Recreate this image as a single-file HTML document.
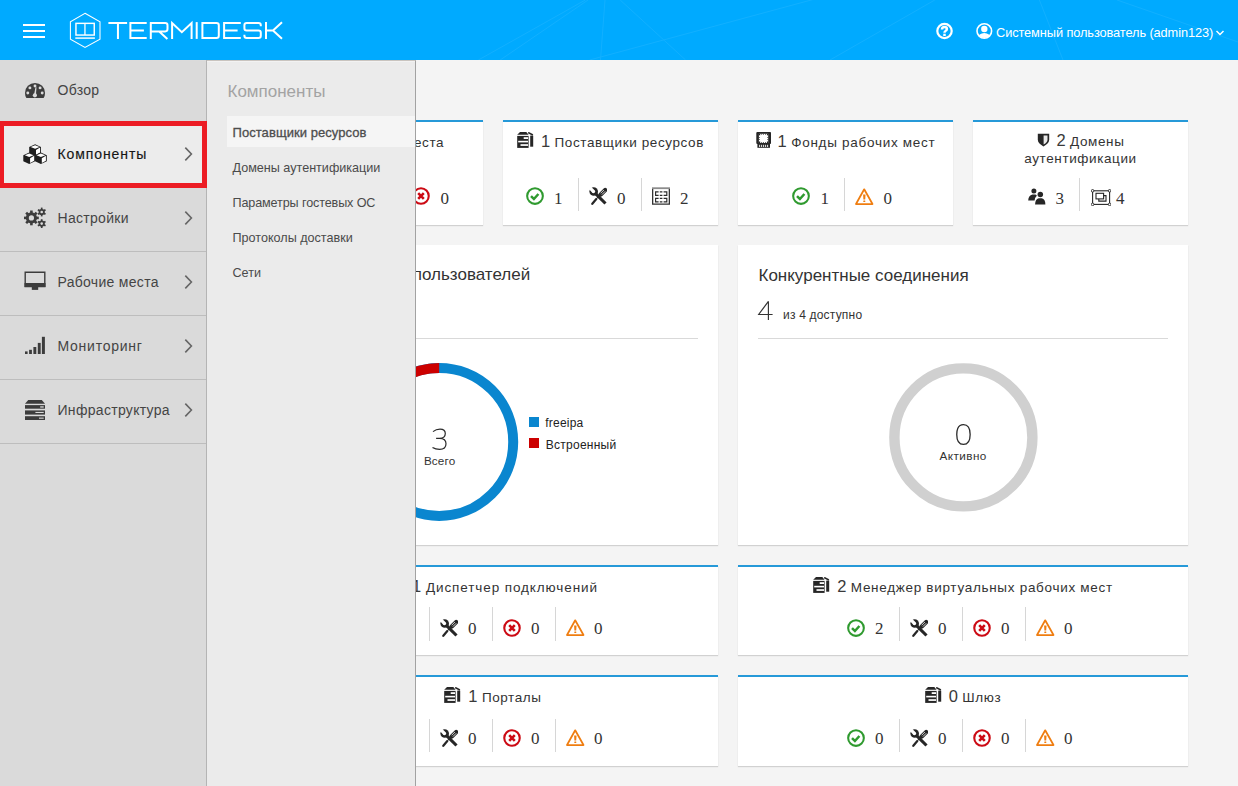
<!DOCTYPE html>
<html><head><meta charset="utf-8">
<style>
*{box-sizing:border-box;margin:0;padding:0}
html,body{width:1238px;height:786px;overflow:hidden;background:#f4f4f4;font-family:"Liberation Sans",sans-serif;color:#333}
.abs{position:absolute}
.t{position:absolute;white-space:nowrap}
#hdr{position:absolute;left:0;top:0;width:1238px;height:60px;background:#00aaff;overflow:hidden}
#side{position:absolute;left:0;top:60px;width:207px;height:726px;background:#dadada;border-right:1px solid #b4b4b4}
#fly{position:absolute;left:207px;top:60px;width:209px;height:726px;background:#ebebeb;border-right:1px solid #a2a2a2;border-top:1px solid #c9c4bf;box-shadow:inset 0 1px 0 #f2f2f2}
.card{position:absolute;background:#fff;box-shadow:0 1px 1px rgba(0,0,0,0.14)}
.card.bt{border-top:2px solid #2699d8}
.ttl{position:absolute;white-space:nowrap;font-size:13.5px;line-height:18px;color:#333;letter-spacing:0.6px;text-align:center}
.tn{font-size:16.5px;letter-spacing:0;color:#3a3a3a}
.dv{position:absolute;width:1px;background:#d6d6d6}
</style></head><body>

<div id="hdr">
  <svg class="abs" style="left:0;top:0" width="1238" height="60">
    <g stroke="#12b0ff" stroke-width="1" fill="none">
      <path d="M478.4 60L585.3 0M500.2 60L588 0M600.5 60L605 0M620.2 0L685.6 60M589.6 60L826 -4"/>
      <path d="M830 60L934.8 0M1039.4 0L1063 60M1117 0L1238 42"/>
    </g>
  </svg>
  <div class="abs" style="left:23px;top:24px;width:22px;height:2px;background:#fff"></div>
  <div class="abs" style="left:23px;top:30px;width:22px;height:2px;background:#fff"></div>
  <div class="abs" style="left:23px;top:36px;width:22px;height:2px;background:#fff"></div>
  <svg class="abs" style="left:68px;top:11px" width="36" height="40" viewBox="0 0 36 40">
    <polygon points="17,2.3 32,10.8 32,28.2 17,36.4 2.4,28.2 2.4,10.8" fill="none" stroke="#fff" stroke-width="1.05"/>
    <rect x="7.95" y="12.35" width="18.3" height="11.7" fill="none" stroke="#fff" stroke-width="1.45"/>
    <line x1="16.95" y1="12.35" x2="16.95" y2="24.05" stroke="#fff" stroke-width="1.3"/>
    <line x1="7.3" y1="27.1" x2="26.9" y2="27.1" stroke="#fff" stroke-width="1.45"/>
  </svg>
  <svg class="abs" style="left:0;top:0" width="300" height="60" viewBox="0 0 300 60">
    <g fill="none" stroke="#fff" stroke-width="2">
      <path d="M108.4 23.05H127.1M117.95 23.05V38.9"/>
      <path d="M146.7 23.05H130.4V37.95H146.7M130.4 30.5H143.9"/>
      <path d="M150.8 38.9V23.05H165.2Q167.5 23.05 167.5 25.3V29.1Q167.5 31.4 165.2 31.4H150.8M159.2 31.4L167.4 38.9"/>
      <path d="M172.1 38.9V23.05L181.85 32.2L191.6 23.05V38.9"/>
      <path d="M196.7 22.1V38.9"/>
      <path d="M202.4 23.05H216.5Q218.8 23.05 218.8 25.3V35.7Q218.8 37.95 216.5 37.95H202.4Z"/>
      <path d="M240.8 23.05H224.1V37.95H240.8M224.1 30.5H237.6"/>
      <path d="M260.8 26.3V25.3Q260.8 23.05 258.5 23.05H246.7Q244.4 23.05 244.4 25.3V28.2Q244.4 30.5 246.7 30.5H258.5Q260.8 30.5 260.8 32.8V35.7Q260.8 37.95 258.5 37.95H246.7Q244.4 37.95 244.4 35.7V34.7"/>
      <path d="M266 22.1V38.9M266 30.5H273M273 30.5L282 22.3M273 30.5L282 38.7"/>
    </g>
  </svg>
  <svg class="abs" style="left:935px;top:22px" width="19" height="19" viewBox="0 0 19 19">
    <circle cx="9.5" cy="9" r="7.2" fill="none" stroke="#fff" stroke-width="2.2"/>
    <path d="M7.0 7.5Q7.0 5.1 9.5 5.1Q11.9 5.1 11.9 7.0Q11.9 8.3 10.5 9.0Q9.5 9.5 9.5 10.7" fill="none" stroke="#fff" stroke-width="2.5"/>
    <rect x="8.25" y="11.7" width="2.5" height="2.3" fill="#fff"/>
  </svg>
  <svg class="abs" style="left:975px;top:22px" width="19" height="19" viewBox="0 0 19 19">
    <defs><clipPath id="uc"><circle cx="9.3" cy="9" r="7"/></clipPath></defs>
    <circle cx="9.3" cy="9" r="7.3" fill="none" stroke="#fff" stroke-width="1.6"/>
    <g clip-path="url(#uc)" fill="#fff">
      <circle cx="9.3" cy="7" r="3.2"/>
      <ellipse cx="9.3" cy="16.5" rx="6.5" ry="5.5"/>
    </g>
  </svg>
  <div class="t" style="left:996px;top:27px;font-size:12.8px;line-height:12.8px;color:#fff;letter-spacing:-0.1px">Системный пользователь (admin123)</div>
  <svg class="abs" style="left:1215px;top:29px" width="10" height="8" viewBox="0 0 10 8">
    <path d="M1.5 2L5 5.5L8.5 2" fill="none" stroke="#fff" stroke-width="1.5"/>
  </svg>
</div>

<div class="card bt" style="left:268px;top:120px;width:215px;height:105px"></div>
<div class="card bt" style="left:503px;top:120px;width:215px;height:105px"></div>
<div class="card bt" style="left:738px;top:120px;width:215px;height:105px"></div>
<div class="card bt" style="left:973px;top:120px;width:215px;height:105px"></div>
<div class="card" style="left:268px;top:245px;width:450px;height:300px"></div>
<div class="card" style="left:738px;top:245px;width:450px;height:300px"></div>
<div class="card bt" style="left:268px;top:565px;width:450px;height:90px"></div>
<div class="card bt" style="left:738px;top:565px;width:450px;height:90px"></div>
<div class="card bt" style="left:268px;top:675px;width:450px;height:91px"></div>
<div class="card bt" style="left:738px;top:675px;width:450px;height:91px"></div>
<div class="ttl" style="left:175.50px;width:400px;top:132.00px"><svg width="15" height="16" viewBox="0 0 15 16" style="vertical-align:-1px;margin-right:7px"><rect x="0.3" y="0" width="14.8" height="12" rx="1" fill="#262626"/><rect x="1.4" y="12" width="12.6" height="3.8" fill="#262626"/><g fill="#fff"><rect x="2.9" y="1.8" width="9.3" height="9.2"/></g><g fill="#262626"><rect x="2.9" y="1.8" width="1.3" height="1.5"/><rect x="10.9" y="1.8" width="1.3" height="1.5"/><rect x="2.9" y="9.5" width="1.3" height="1.5"/><rect x="10.9" y="9.5" width="1.3" height="1.5"/><rect x="5.4" y="1.8" width="0.7" height="1"/><rect x="7.3" y="1.8" width="0.7" height="1"/><rect x="9.1" y="1.8" width="0.7" height="1"/><rect x="5.4" y="10" width="0.7" height="1"/><rect x="7.3" y="10" width="0.7" height="1"/><rect x="9.1" y="10" width="0.7" height="1"/><rect x="2.9" y="5" width="1" height="0.7"/><rect x="2.9" y="7" width="1" height="0.7"/><rect x="11.2" y="5" width="1" height="0.7"/><rect x="11.2" y="7" width="1" height="0.7"/></g><g fill="#fff"><rect x="3.2" y="12.8" width="0.9" height="2.2"/><rect x="5.2" y="12.8" width="0.9" height="2.2"/><rect x="7.2" y="12.8" width="0.9" height="2.2"/><rect x="9.2" y="12.8" width="0.9" height="2.2"/><rect x="11.2" y="12.8" width="0.9" height="2.2"/></g></svg><span class="tn">1</span> Рабочие места</div>
<svg class="abs" style="left:286.30px;top:187.00px" width="18" height="18" viewBox="0 0 18 18"><circle cx="9" cy="9" r="7.85" fill="none" stroke="#2f9a2f" stroke-width="2.05"/><path d="M5.0 9.2L7.9 12.0L12.4 7.0" fill="none" stroke="#2f9a2f" stroke-width="2.5"/></svg>
<div class="t" style="top:189.76px;font-size:17px;line-height:17px;color:#333;font-family:'Liberation Serif',serif;left:314.50px;">1</div>
<div class="dv" style="left:338.00px;top:178.4px;height:32.3px"></div>
<svg class="abs" style="left:349.30px;top:186.50px" width="19" height="19" viewBox="0 0 19 19"><path d="M9.2 2.3L17.5 17H1.0Z" fill="none" stroke="#ef7d10" stroke-width="1.75" stroke-linejoin="round"/><path d="M8.1 7.6H10.5L10.2 12.4H8.4Z" fill="#ef7d10"/><rect x="8.2" y="13.4" width="2.2" height="1.5" rx="0.6" fill="#ef7d10"/></svg>
<div class="t" style="top:189.76px;font-size:17px;line-height:17px;color:#333;font-family:'Liberation Serif',serif;left:377.50px;">0</div>
<div class="dv" style="left:401.00px;top:178.4px;height:32.3px"></div>
<svg class="abs" style="left:412.30px;top:187.00px" width="18" height="18" viewBox="0 0 18 18"><circle cx="9" cy="9" r="7.75" fill="none" stroke="#cc0a14" stroke-width="2.1"/><path d="M6.2 6.2L11.8 11.8M11.8 6.2L6.2 11.8" fill="none" stroke="#cc0a14" stroke-width="2.6"/></svg>
<div class="t" style="top:189.76px;font-size:17px;line-height:17px;color:#333;font-family:'Liberation Serif',serif;left:440.50px;">0</div>
<div class="ttl" style="left:410.50px;width:400px;top:132.00px"><svg width="17" height="16" viewBox="0 0 17 16" style="vertical-align:-1.2px;margin-right:7px"><path d="M0.2 2.7L3.0 0H9.3L11.6 2.7Z" fill="#262626"/><rect x="0.2" y="3.9" width="11.4" height="12" fill="#262626"/><rect x="6.7" y="5.2" width="4.3" height="1.8" fill="#fff"/><rect x="1.2" y="8.8" width="9.8" height="1.6" fill="#fff"/><rect x="3.5" y="12.2" width="7.5" height="1.7" fill="#fff"/><path d="M11.2 0.5L15.9 3.0" stroke="#262626" stroke-width="1.5"/><rect x="13.2" y="3.6" width="3" height="11.1" fill="#262626"/></svg><span class="tn">1</span> Поставщики ресурсов</div>
<svg class="abs" style="left:525.80px;top:187.00px" width="18" height="18" viewBox="0 0 18 18"><circle cx="9" cy="9" r="7.85" fill="none" stroke="#2f9a2f" stroke-width="2.05"/><path d="M5.0 9.2L7.9 12.0L12.4 7.0" fill="none" stroke="#2f9a2f" stroke-width="2.5"/></svg>
<div class="t" style="top:189.76px;font-size:17px;line-height:17px;color:#333;font-family:'Liberation Serif',serif;left:554.00px;">1</div>
<div class="dv" style="left:577.50px;top:178.4px;height:32.3px"></div>
<svg class="abs" style="left:588.80px;top:187.00px" width="18" height="18" viewBox="0 0 18 18"><path d="M6.6 6.6L16.5 16.5" stroke="#262626" stroke-width="3.1"/><circle cx="4.7" cy="4.5" r="4.3" fill="#262626"/><path d="M4.4 4.4L-1 -1" stroke="#fff" stroke-width="3.3"/><circle cx="4.4" cy="4.4" r="1.75" fill="#fff"/><path d="M10.6 8.6L8.2 11" stroke="#262626" stroke-width="1.3"/><path d="M7.3 12.0L3.3 16.8" stroke="#262626" stroke-width="2.2" stroke-linecap="round"/><path d="M11.7 7.5L16.2 3.0" stroke="#262626" stroke-width="4.3" stroke-linecap="round"/><path d="M11.6 6.3L14.9 3.0M12.9 7.6L16.2 4.3" stroke="#fff" stroke-width="0.8"/></svg>
<div class="t" style="top:189.76px;font-size:17px;line-height:17px;color:#333;font-family:'Liberation Serif',serif;left:617.00px;">0</div>
<div class="dv" style="left:640.50px;top:178.4px;height:32.3px"></div>
<svg class="abs" style="left:651.80px;top:187.00px" width="18" height="18" viewBox="0 0 18 18"><path d="M0.65 1.2V17.15H17.35V1.2" fill="none" stroke="#333" stroke-width="1.3"/><rect x="0" y="0.3" width="18" height="1.8" fill="#8c8c8c"/><g fill="none" stroke="#2a2a2a" stroke-width="1.15"><path d="M6.6 4.8H3.6V8.3H6.6M11.6 4.8H14.8V8.3H11.6M7.8 4.8H10.4M7.8 8.3H10.4"/><path d="M6.6 11.3H3.6V14.9H6.6M11.6 11.3H14.8V14.9H11.6M7.8 11.3H10.4M7.8 14.9H10.4"/></g></svg>
<div class="t" style="top:189.76px;font-size:17px;line-height:17px;color:#333;font-family:'Liberation Serif',serif;left:680.00px;">2</div>
<div class="ttl" style="left:645.50px;width:400px;top:132.00px;letter-spacing:0.72px"><svg width="15" height="16" viewBox="0 0 15 16" style="vertical-align:-1px;margin-right:7px"><rect x="0.3" y="0" width="14.8" height="12" rx="1" fill="#262626"/><rect x="1.4" y="12" width="12.6" height="3.8" fill="#262626"/><g fill="#fff"><rect x="2.9" y="1.8" width="9.3" height="9.2"/></g><g fill="#262626"><rect x="2.9" y="1.8" width="1.3" height="1.5"/><rect x="10.9" y="1.8" width="1.3" height="1.5"/><rect x="2.9" y="9.5" width="1.3" height="1.5"/><rect x="10.9" y="9.5" width="1.3" height="1.5"/><rect x="5.4" y="1.8" width="0.7" height="1"/><rect x="7.3" y="1.8" width="0.7" height="1"/><rect x="9.1" y="1.8" width="0.7" height="1"/><rect x="5.4" y="10" width="0.7" height="1"/><rect x="7.3" y="10" width="0.7" height="1"/><rect x="9.1" y="10" width="0.7" height="1"/><rect x="2.9" y="5" width="1" height="0.7"/><rect x="2.9" y="7" width="1" height="0.7"/><rect x="11.2" y="5" width="1" height="0.7"/><rect x="11.2" y="7" width="1" height="0.7"/></g><g fill="#fff"><rect x="3.2" y="12.8" width="0.9" height="2.2"/><rect x="5.2" y="12.8" width="0.9" height="2.2"/><rect x="7.2" y="12.8" width="0.9" height="2.2"/><rect x="9.2" y="12.8" width="0.9" height="2.2"/><rect x="11.2" y="12.8" width="0.9" height="2.2"/></g></svg><span class="tn">1</span> Фонды рабочих мест</div>
<svg class="abs" style="left:792.30px;top:187.00px" width="18" height="18" viewBox="0 0 18 18"><circle cx="9" cy="9" r="7.85" fill="none" stroke="#2f9a2f" stroke-width="2.05"/><path d="M5.0 9.2L7.9 12.0L12.4 7.0" fill="none" stroke="#2f9a2f" stroke-width="2.5"/></svg>
<div class="t" style="top:189.76px;font-size:17px;line-height:17px;color:#333;font-family:'Liberation Serif',serif;left:820.50px;">1</div>
<div class="dv" style="left:844.00px;top:178.4px;height:32.3px"></div>
<svg class="abs" style="left:855.30px;top:186.50px" width="19" height="19" viewBox="0 0 19 19"><path d="M9.2 2.3L17.5 17H1.0Z" fill="none" stroke="#ef7d10" stroke-width="1.75" stroke-linejoin="round"/><path d="M8.1 7.6H10.5L10.2 12.4H8.4Z" fill="#ef7d10"/><rect x="8.2" y="13.4" width="2.2" height="1.5" rx="0.6" fill="#ef7d10"/></svg>
<div class="t" style="top:189.76px;font-size:17px;line-height:17px;color:#333;font-family:'Liberation Serif',serif;left:883.50px;">0</div>
<div class="ttl" style="left:980.5px;width:200px;top:132px;line-height:16.5px;white-space:normal"><svg width="13" height="14" viewBox="0 0 13 14" style="vertical-align:-1px;margin-right:7px"><path d="M0.8 0.8H12.2V6.6Q12.2 10.6 6.5 13.4Q0.8 10.6 0.8 6.6Z" fill="#262626"/><path d="M6.6 2.5H10.5V6.6Q10.5 9.6 6.6 11.5Z" fill="#e8e8e8"/></svg><span class="tn">2</span> Домены аутентификации</div>
<svg class="abs" style="left:1027.90px;top:188.20px" width="18" height="17" viewBox="0 0 18 17"><circle cx="5.9" cy="2.9" r="2.5" fill="#262626"/><path d="M0.2 12.6Q0.4 7.4 4.4 6.6L7.4 6.6Q8.6 7 8.8 7.8Q6.8 9.6 6.6 12.6Z" fill="#262626"/><circle cx="12.3" cy="6.6" r="2.75" fill="#262626"/><path d="M7.1 16.4Q7.2 11 10.6 10.2H13.9Q17.3 11 17.4 16.4Z" fill="#262626"/></svg>
<div class="t" style="top:189.76px;font-size:17px;line-height:17px;color:#333;font-family:'Liberation Serif',serif;left:1055.50px;">3</div>
<div class="dv" style="left:1079.00px;top:178.4px;height:32.3px"></div>
<svg class="abs" style="left:1091.30px;top:188.50px" width="20" height="17" viewBox="0 0 20 17"><rect x="1.6" y="1.8" width="17" height="13.6" fill="none" stroke="#262626" stroke-width="1.1"/><g fill="#fff" stroke="#262626" stroke-width="0.9"><circle cx="1.6" cy="1.8" r="1.3"/><circle cx="18.6" cy="1.8" r="1.3"/><circle cx="1.6" cy="15.4" r="1.3"/><circle cx="18.6" cy="15.4" r="1.3"/></g><rect x="5" y="4.3" width="7.6" height="5.6" fill="none" stroke="#262626" stroke-width="1.1"/><path d="M12.6 6.6H15V12.1H7.8V9.9" fill="none" stroke="#262626" stroke-width="1.1"/></svg>
<div class="t" style="top:189.76px;font-size:17px;line-height:17px;color:#333;font-family:'Liberation Serif',serif;left:1116.00px;">4</div>
<div class="t" style="top:266.41px;font-size:17px;line-height:17px;color:#333;font-family:'Liberation Sans',sans-serif;left:-69.80px;width:600px;text-align:right;">Количество пользователей</div>
<div class="t" style="top:308.84px;font-size:12px;line-height:12px;color:#333;font-family:'Liberation Sans',sans-serif;left:288.00px;"><span style="font-size:25px;color:#444">3</span></div>
<div class="abs" style="left:288px;top:338px;width:410px;height:1px;background:#d9d9d9"></div>
<svg class="abs" style="left:355.00px;top:357.00px" width="170" height="170" viewBox="0 0 170 170"><circle cx="84.2" cy="84.9" r="74" fill="none" stroke="#0a86cf" stroke-width="10"/><path d="M84.2 10.9A74 74 0 0 0 20.1 47.9" fill="none" stroke="#cc0000" stroke-width="10"/></svg>
<svg class="abs" style="left:420.00px;top:420.00px" width="40" height="40" viewBox="0 0 40 40"><path d="M13 11.6Q16 9.2 20 9.2Q25.3 9.2 25.3 13.6Q25.3 18.4 19.6 18.4H16.1M19.6 18.4Q26 18.4 26 23.8Q26 29.4 19.6 29.4Q15.5 29.4 12.5 27.5" fill="none" stroke="#2a2a2a" stroke-width="1.2"/></svg>
<div class="t" style="top:454.70px;font-size:11.7px;line-height:11.7px;color:#333;font-family:'Liberation Sans',sans-serif;letter-spacing:0.15px;left:39.60px;width:800px;text-align:center;">Всего</div>
<div class="abs" style="left:529px;top:417px;width:10px;height:10px;background:#0a86cf"></div>
<div class="abs" style="left:529px;top:438px;width:10px;height:10px;background:#cc0000"></div>
<div class="t" style="top:417.14px;font-size:12px;line-height:12px;color:#222;font-family:'Liberation Sans',sans-serif;letter-spacing:0.2px;left:545.30px;">freeipa</div>
<div class="t" style="top:438.54px;font-size:12px;line-height:12px;color:#222;font-family:'Liberation Sans',sans-serif;letter-spacing:0.25px;left:545.80px;">Встроенный</div>
<div class="t" style="top:267.11px;font-size:17px;line-height:17px;color:#333;font-family:'Liberation Sans',sans-serif;left:758.50px;">Конкурентные соединения</div>
<svg class="abs" style="left:750.00px;top:295.00px" width="30" height="30" viewBox="0 0 30 30"><path d="M18.4 6.3V24.9M18.4 6.3L8.7 19.5H22.6" fill="none" stroke="#333" stroke-width="1.15"/></svg>
<div class="t" style="top:308.74px;font-size:12px;line-height:12px;color:#333;font-family:'Liberation Sans',sans-serif;letter-spacing:0.2px;left:783.00px;">из 4 доступно</div>
<div class="abs" style="left:758px;top:338px;width:410px;height:1px;background:#d9d9d9"></div>
<svg class="abs" style="left:884.00px;top:358.00px" width="160" height="160" viewBox="0 0 160 160"><circle cx="79.4" cy="79.4" r="69" fill="none" stroke="#d0d0d0" stroke-width="10.4"/></svg>
<svg class="abs" style="left:950.00px;top:420.00px" width="30" height="30" viewBox="0 0 30 30"><path d="M13.45 4.55C7.4 4.55 6.75 11 6.75 14.45C6.75 18 7.4 24.35 13.45 24.35C19.5 24.35 20.15 18 20.15 14.45C20.15 11 19.5 4.55 13.45 4.55Z" fill="none" stroke="#2a2a2a" stroke-width="1.3"/></svg>
<div class="t" style="top:449.60px;font-size:11.7px;line-height:11.7px;color:#333;font-family:'Liberation Sans',sans-serif;letter-spacing:0.45px;left:563.20px;width:800px;text-align:center;">Активно</div>
<div class="ttl" style="left:293.00px;width:400px;top:577.00px;letter-spacing:0.9px"><svg width="17" height="16" viewBox="0 0 17 16" style="vertical-align:-1.2px;margin-right:7px"><path d="M0.2 2.7L3.0 0H9.3L11.6 2.7Z" fill="#262626"/><rect x="0.2" y="3.9" width="11.4" height="12" fill="#262626"/><rect x="6.7" y="5.2" width="4.3" height="1.8" fill="#fff"/><rect x="1.2" y="8.8" width="9.8" height="1.6" fill="#fff"/><rect x="3.5" y="12.2" width="7.5" height="1.7" fill="#fff"/><path d="M11.2 0.5L15.9 3.0" stroke="#262626" stroke-width="1.5"/><rect x="13.2" y="3.6" width="3" height="11.1" fill="#262626"/></svg><span class="tn">1</span> Диспетчер подключений</div>
<svg class="abs" style="left:376.80px;top:618.70px" width="18" height="18" viewBox="0 0 18 18"><circle cx="9" cy="9" r="7.85" fill="none" stroke="#2f9a2f" stroke-width="2.05"/><path d="M5.0 9.2L7.9 12.0L12.4 7.0" fill="none" stroke="#2f9a2f" stroke-width="2.5"/></svg>
<div class="t" style="top:619.76px;font-size:17px;line-height:17px;color:#333;font-family:'Liberation Serif',serif;left:405.00px;">1</div>
<div class="dv" style="left:428.50px;top:607.3px;height:33.3px"></div>
<svg class="abs" style="left:439.80px;top:618.70px" width="18" height="18" viewBox="0 0 18 18"><path d="M6.6 6.6L16.5 16.5" stroke="#262626" stroke-width="3.1"/><circle cx="4.7" cy="4.5" r="4.3" fill="#262626"/><path d="M4.4 4.4L-1 -1" stroke="#fff" stroke-width="3.3"/><circle cx="4.4" cy="4.4" r="1.75" fill="#fff"/><path d="M10.6 8.6L8.2 11" stroke="#262626" stroke-width="1.3"/><path d="M7.3 12.0L3.3 16.8" stroke="#262626" stroke-width="2.2" stroke-linecap="round"/><path d="M11.7 7.5L16.2 3.0" stroke="#262626" stroke-width="4.3" stroke-linecap="round"/><path d="M11.6 6.3L14.9 3.0M12.9 7.6L16.2 4.3" stroke="#fff" stroke-width="0.8"/></svg>
<div class="t" style="top:619.76px;font-size:17px;line-height:17px;color:#333;font-family:'Liberation Serif',serif;left:468.00px;">0</div>
<div class="dv" style="left:491.50px;top:607.3px;height:33.3px"></div>
<svg class="abs" style="left:502.80px;top:618.70px" width="18" height="18" viewBox="0 0 18 18"><circle cx="9" cy="9" r="7.75" fill="none" stroke="#cc0a14" stroke-width="2.1"/><path d="M6.2 6.2L11.8 11.8M11.8 6.2L6.2 11.8" fill="none" stroke="#cc0a14" stroke-width="2.6"/></svg>
<div class="t" style="top:619.76px;font-size:17px;line-height:17px;color:#333;font-family:'Liberation Serif',serif;left:531.00px;">0</div>
<div class="dv" style="left:554.50px;top:607.3px;height:33.3px"></div>
<svg class="abs" style="left:565.80px;top:618.20px" width="19" height="19" viewBox="0 0 19 19"><path d="M9.2 2.3L17.5 17H1.0Z" fill="none" stroke="#ef7d10" stroke-width="1.75" stroke-linejoin="round"/><path d="M8.1 7.6H10.5L10.2 12.4H8.4Z" fill="#ef7d10"/><rect x="8.2" y="13.4" width="2.2" height="1.5" rx="0.6" fill="#ef7d10"/></svg>
<div class="t" style="top:619.76px;font-size:17px;line-height:17px;color:#333;font-family:'Liberation Serif',serif;left:594.00px;">0</div>
<div class="ttl" style="left:763.00px;width:400px;top:577.00px;letter-spacing:0.7px"><svg width="17" height="16" viewBox="0 0 17 16" style="vertical-align:-1.2px;margin-right:7px"><path d="M0.2 2.7L3.0 0H9.3L11.6 2.7Z" fill="#262626"/><rect x="0.2" y="3.9" width="11.4" height="12" fill="#262626"/><rect x="6.7" y="5.2" width="4.3" height="1.8" fill="#fff"/><rect x="1.2" y="8.8" width="9.8" height="1.6" fill="#fff"/><rect x="3.5" y="12.2" width="7.5" height="1.7" fill="#fff"/><path d="M11.2 0.5L15.9 3.0" stroke="#262626" stroke-width="1.5"/><rect x="13.2" y="3.6" width="3" height="11.1" fill="#262626"/></svg><span class="tn">2</span> Менеджер виртуальных рабочих мест</div>
<svg class="abs" style="left:846.80px;top:618.70px" width="18" height="18" viewBox="0 0 18 18"><circle cx="9" cy="9" r="7.85" fill="none" stroke="#2f9a2f" stroke-width="2.05"/><path d="M5.0 9.2L7.9 12.0L12.4 7.0" fill="none" stroke="#2f9a2f" stroke-width="2.5"/></svg>
<div class="t" style="top:619.76px;font-size:17px;line-height:17px;color:#333;font-family:'Liberation Serif',serif;left:875.00px;">2</div>
<div class="dv" style="left:898.50px;top:607.3px;height:33.3px"></div>
<svg class="abs" style="left:909.80px;top:618.70px" width="18" height="18" viewBox="0 0 18 18"><path d="M6.6 6.6L16.5 16.5" stroke="#262626" stroke-width="3.1"/><circle cx="4.7" cy="4.5" r="4.3" fill="#262626"/><path d="M4.4 4.4L-1 -1" stroke="#fff" stroke-width="3.3"/><circle cx="4.4" cy="4.4" r="1.75" fill="#fff"/><path d="M10.6 8.6L8.2 11" stroke="#262626" stroke-width="1.3"/><path d="M7.3 12.0L3.3 16.8" stroke="#262626" stroke-width="2.2" stroke-linecap="round"/><path d="M11.7 7.5L16.2 3.0" stroke="#262626" stroke-width="4.3" stroke-linecap="round"/><path d="M11.6 6.3L14.9 3.0M12.9 7.6L16.2 4.3" stroke="#fff" stroke-width="0.8"/></svg>
<div class="t" style="top:619.76px;font-size:17px;line-height:17px;color:#333;font-family:'Liberation Serif',serif;left:938.00px;">0</div>
<div class="dv" style="left:961.50px;top:607.3px;height:33.3px"></div>
<svg class="abs" style="left:972.80px;top:618.70px" width="18" height="18" viewBox="0 0 18 18"><circle cx="9" cy="9" r="7.75" fill="none" stroke="#cc0a14" stroke-width="2.1"/><path d="M6.2 6.2L11.8 11.8M11.8 6.2L6.2 11.8" fill="none" stroke="#cc0a14" stroke-width="2.6"/></svg>
<div class="t" style="top:619.76px;font-size:17px;line-height:17px;color:#333;font-family:'Liberation Serif',serif;left:1001.00px;">0</div>
<div class="dv" style="left:1024.50px;top:607.3px;height:33.3px"></div>
<svg class="abs" style="left:1035.80px;top:618.20px" width="19" height="19" viewBox="0 0 19 19"><path d="M9.2 2.3L17.5 17H1.0Z" fill="none" stroke="#ef7d10" stroke-width="1.75" stroke-linejoin="round"/><path d="M8.1 7.6H10.5L10.2 12.4H8.4Z" fill="#ef7d10"/><rect x="8.2" y="13.4" width="2.2" height="1.5" rx="0.6" fill="#ef7d10"/></svg>
<div class="t" style="top:619.76px;font-size:17px;line-height:17px;color:#333;font-family:'Liberation Serif',serif;left:1064.00px;">0</div>
<div class="ttl" style="left:293.00px;width:400px;top:686.60px"><svg width="17" height="16" viewBox="0 0 17 16" style="vertical-align:-1.2px;margin-right:7px"><path d="M0.2 2.7L3.0 0H9.3L11.6 2.7Z" fill="#262626"/><rect x="0.2" y="3.9" width="11.4" height="12" fill="#262626"/><rect x="6.7" y="5.2" width="4.3" height="1.8" fill="#fff"/><rect x="1.2" y="8.8" width="9.8" height="1.6" fill="#fff"/><rect x="3.5" y="12.2" width="7.5" height="1.7" fill="#fff"/><path d="M11.2 0.5L15.9 3.0" stroke="#262626" stroke-width="1.5"/><rect x="13.2" y="3.6" width="3" height="11.1" fill="#262626"/></svg><span class="tn">1</span> Порталы</div>
<svg class="abs" style="left:376.80px;top:728.70px" width="18" height="18" viewBox="0 0 18 18"><circle cx="9" cy="9" r="7.85" fill="none" stroke="#2f9a2f" stroke-width="2.05"/><path d="M5.0 9.2L7.9 12.0L12.4 7.0" fill="none" stroke="#2f9a2f" stroke-width="2.5"/></svg>
<div class="t" style="top:729.76px;font-size:17px;line-height:17px;color:#333;font-family:'Liberation Serif',serif;left:405.00px;">1</div>
<div class="dv" style="left:428.50px;top:719px;height:33px"></div>
<svg class="abs" style="left:439.80px;top:728.70px" width="18" height="18" viewBox="0 0 18 18"><path d="M6.6 6.6L16.5 16.5" stroke="#262626" stroke-width="3.1"/><circle cx="4.7" cy="4.5" r="4.3" fill="#262626"/><path d="M4.4 4.4L-1 -1" stroke="#fff" stroke-width="3.3"/><circle cx="4.4" cy="4.4" r="1.75" fill="#fff"/><path d="M10.6 8.6L8.2 11" stroke="#262626" stroke-width="1.3"/><path d="M7.3 12.0L3.3 16.8" stroke="#262626" stroke-width="2.2" stroke-linecap="round"/><path d="M11.7 7.5L16.2 3.0" stroke="#262626" stroke-width="4.3" stroke-linecap="round"/><path d="M11.6 6.3L14.9 3.0M12.9 7.6L16.2 4.3" stroke="#fff" stroke-width="0.8"/></svg>
<div class="t" style="top:729.76px;font-size:17px;line-height:17px;color:#333;font-family:'Liberation Serif',serif;left:468.00px;">0</div>
<div class="dv" style="left:491.50px;top:719px;height:33px"></div>
<svg class="abs" style="left:502.80px;top:728.70px" width="18" height="18" viewBox="0 0 18 18"><circle cx="9" cy="9" r="7.75" fill="none" stroke="#cc0a14" stroke-width="2.1"/><path d="M6.2 6.2L11.8 11.8M11.8 6.2L6.2 11.8" fill="none" stroke="#cc0a14" stroke-width="2.6"/></svg>
<div class="t" style="top:729.76px;font-size:17px;line-height:17px;color:#333;font-family:'Liberation Serif',serif;left:531.00px;">0</div>
<div class="dv" style="left:554.50px;top:719px;height:33px"></div>
<svg class="abs" style="left:565.80px;top:728.20px" width="19" height="19" viewBox="0 0 19 19"><path d="M9.2 2.3L17.5 17H1.0Z" fill="none" stroke="#ef7d10" stroke-width="1.75" stroke-linejoin="round"/><path d="M8.1 7.6H10.5L10.2 12.4H8.4Z" fill="#ef7d10"/><rect x="8.2" y="13.4" width="2.2" height="1.5" rx="0.6" fill="#ef7d10"/></svg>
<div class="t" style="top:729.76px;font-size:17px;line-height:17px;color:#333;font-family:'Liberation Serif',serif;left:594.00px;">0</div>
<div class="ttl" style="left:763.00px;width:400px;top:686.60px"><svg width="17" height="16" viewBox="0 0 17 16" style="vertical-align:-1.2px;margin-right:7px"><path d="M0.2 2.7L3.0 0H9.3L11.6 2.7Z" fill="#262626"/><rect x="0.2" y="3.9" width="11.4" height="12" fill="#262626"/><rect x="6.7" y="5.2" width="4.3" height="1.8" fill="#fff"/><rect x="1.2" y="8.8" width="9.8" height="1.6" fill="#fff"/><rect x="3.5" y="12.2" width="7.5" height="1.7" fill="#fff"/><path d="M11.2 0.5L15.9 3.0" stroke="#262626" stroke-width="1.5"/><rect x="13.2" y="3.6" width="3" height="11.1" fill="#262626"/></svg><span class="tn">0</span> Шлюз</div>
<svg class="abs" style="left:846.80px;top:728.70px" width="18" height="18" viewBox="0 0 18 18"><circle cx="9" cy="9" r="7.85" fill="none" stroke="#2f9a2f" stroke-width="2.05"/><path d="M5.0 9.2L7.9 12.0L12.4 7.0" fill="none" stroke="#2f9a2f" stroke-width="2.5"/></svg>
<div class="t" style="top:729.76px;font-size:17px;line-height:17px;color:#333;font-family:'Liberation Serif',serif;left:875.00px;">0</div>
<div class="dv" style="left:898.50px;top:719px;height:33px"></div>
<svg class="abs" style="left:909.80px;top:728.70px" width="18" height="18" viewBox="0 0 18 18"><path d="M6.6 6.6L16.5 16.5" stroke="#262626" stroke-width="3.1"/><circle cx="4.7" cy="4.5" r="4.3" fill="#262626"/><path d="M4.4 4.4L-1 -1" stroke="#fff" stroke-width="3.3"/><circle cx="4.4" cy="4.4" r="1.75" fill="#fff"/><path d="M10.6 8.6L8.2 11" stroke="#262626" stroke-width="1.3"/><path d="M7.3 12.0L3.3 16.8" stroke="#262626" stroke-width="2.2" stroke-linecap="round"/><path d="M11.7 7.5L16.2 3.0" stroke="#262626" stroke-width="4.3" stroke-linecap="round"/><path d="M11.6 6.3L14.9 3.0M12.9 7.6L16.2 4.3" stroke="#fff" stroke-width="0.8"/></svg>
<div class="t" style="top:729.76px;font-size:17px;line-height:17px;color:#333;font-family:'Liberation Serif',serif;left:938.00px;">0</div>
<div class="dv" style="left:961.50px;top:719px;height:33px"></div>
<svg class="abs" style="left:972.80px;top:728.70px" width="18" height="18" viewBox="0 0 18 18"><circle cx="9" cy="9" r="7.75" fill="none" stroke="#cc0a14" stroke-width="2.1"/><path d="M6.2 6.2L11.8 11.8M11.8 6.2L6.2 11.8" fill="none" stroke="#cc0a14" stroke-width="2.6"/></svg>
<div class="t" style="top:729.76px;font-size:17px;line-height:17px;color:#333;font-family:'Liberation Serif',serif;left:1001.00px;">0</div>
<div class="dv" style="left:1024.50px;top:719px;height:33px"></div>
<svg class="abs" style="left:1035.80px;top:728.20px" width="19" height="19" viewBox="0 0 19 19"><path d="M9.2 2.3L17.5 17H1.0Z" fill="none" stroke="#ef7d10" stroke-width="1.75" stroke-linejoin="round"/><path d="M8.1 7.6H10.5L10.2 12.4H8.4Z" fill="#ef7d10"/><rect x="8.2" y="13.4" width="2.2" height="1.5" rx="0.6" fill="#ef7d10"/></svg>
<div class="t" style="top:729.76px;font-size:17px;line-height:17px;color:#333;font-family:'Liberation Serif',serif;left:1064.00px;">0</div>
<div id="side">
<div class="abs" style="left:0;top:63px;width:206px;height:1px;background:#bdbdbd"></div>
<div class="abs" style="left:0;top:127px;width:206px;height:1px;background:#bdbdbd"></div>
<div class="abs" style="left:0;top:191px;width:206px;height:1px;background:#bdbdbd"></div>
<div class="abs" style="left:0;top:255px;width:206px;height:1px;background:#bdbdbd"></div>
<div class="abs" style="left:0;top:319px;width:206px;height:1px;background:#bdbdbd"></div>
<div class="abs" style="left:0;top:383px;width:206px;height:1px;background:#bdbdbd"></div>
<div class="abs" style="left:0;top:64px;width:206px;height:63px;background:#ececec"></div>
</div>
<div class="t" style="top:83.15px;font-size:14px;line-height:14px;color:#444;font-family:'Liberation Sans',sans-serif;letter-spacing:0.3px;left:57.50px;">Обзор</div>
<div class="t" style="top:147.15px;font-size:14px;line-height:14px;color:#161616;font-family:'Liberation Sans',sans-serif;letter-spacing:0.9px;left:57.50px;-webkit-text-stroke:0.15px #161616">Компоненты</div>
<svg class="abs" style="left:183.00px;top:146.40px" width="12" height="16" viewBox="0 0 12 16"><path d="M2.3 1.6L8.4 8L2.3 14.4" fill="none" stroke="#666" stroke-width="1.6"/></svg>
<div class="t" style="top:211.15px;font-size:14px;line-height:14px;color:#444;font-family:'Liberation Sans',sans-serif;letter-spacing:0.3px;left:57.50px;">Настройки</div>
<svg class="abs" style="left:183.00px;top:210.40px" width="12" height="16" viewBox="0 0 12 16"><path d="M2.3 1.6L8.4 8L2.3 14.4" fill="none" stroke="#666" stroke-width="1.6"/></svg>
<div class="t" style="top:275.15px;font-size:14px;line-height:14px;color:#444;font-family:'Liberation Sans',sans-serif;letter-spacing:0.3px;left:57.50px;">Рабочие места</div>
<svg class="abs" style="left:183.00px;top:274.40px" width="12" height="16" viewBox="0 0 12 16"><path d="M2.3 1.6L8.4 8L2.3 14.4" fill="none" stroke="#666" stroke-width="1.6"/></svg>
<div class="t" style="top:339.15px;font-size:14px;line-height:14px;color:#444;font-family:'Liberation Sans',sans-serif;letter-spacing:0.75px;left:57.50px;">Мониторинг</div>
<svg class="abs" style="left:183.00px;top:338.40px" width="12" height="16" viewBox="0 0 12 16"><path d="M2.3 1.6L8.4 8L2.3 14.4" fill="none" stroke="#666" stroke-width="1.6"/></svg>
<div class="t" style="top:403.15px;font-size:14px;line-height:14px;color:#444;font-family:'Liberation Sans',sans-serif;letter-spacing:0.3px;left:57.50px;">Инфраструктура</div>
<svg class="abs" style="left:183.00px;top:402.40px" width="12" height="16" viewBox="0 0 12 16"><path d="M2.3 1.6L8.4 8L2.3 14.4" fill="none" stroke="#666" stroke-width="1.6"/></svg>
<svg class="abs" style="left:24.00px;top:82.00px" width="22" height="17" viewBox="0 0 22 17"><defs><clipPath id="gclip"><rect x="0" y="0" width="22" height="16"/></clipPath></defs><circle cx="11" cy="10.9" r="10" fill="#3c3c3c" clip-path="url(#gclip)"/><g fill="#dadada"><circle cx="11" cy="4.0" r="1.45"/><circle cx="5.9" cy="5.9" r="1.45"/><circle cx="16.1" cy="5.9" r="1.45"/><circle cx="3.8" cy="11.0" r="1.45"/><circle cx="18.2" cy="11.0" r="1.45"/><circle cx="10.9" cy="13.3" r="2.1"/><path d="M10.0 12.8L11.5 5.2L12.5 5.3L11.9 13.2Z"/></g></svg>
<svg class="abs" style="left:22.00px;top:143.00px" width="26" height="22" viewBox="0 0 26 22"><path d="M13.1 1.3L19.0 4.0V10.0L13.1 12.7L7.199999999999999 10.0V4.0Z" fill="#1e1e1e"/><path d="M13.1 2.3L17.5 4.0L13.1 5.7L8.7 4.0Z" fill="#fff"/><path d="M14.0 7.0L18.1 4.6V9.5L14.0 11.7Z" fill="#fff"/><path d="M7.2 9.5L13.100000000000001 12.2V18.2L7.2 20.9L1.2999999999999998 18.2V12.2Z" fill="#1e1e1e"/><path d="M7.2 10.5L11.600000000000001 12.2L7.2 13.9L2.8 12.2Z" fill="#fff"/><path d="M8.1 15.200000000000001L12.200000000000001 12.799999999999999V17.7L8.1 19.9Z" fill="#fff"/><path d="M18.9 9.5L24.799999999999997 12.2V18.2L18.9 20.9L12.999999999999998 18.2V12.2Z" fill="#1e1e1e"/><path d="M18.9 10.5L23.299999999999997 12.2L18.9 13.9L14.499999999999998 12.2Z" fill="#fff"/><path d="M19.799999999999997 15.200000000000001L23.9 12.799999999999999V17.7L19.799999999999997 19.9Z" fill="#fff"/></svg>
<svg class="abs" style="left:22.00px;top:204.00px" width="28" height="26" viewBox="0 0 28 26"><g fill="#3c3c3c"><rect x="8.1" y="6.500000000000001" width="2.6" height="3.6" transform="rotate(0.0 9.4 13.9)"/><rect x="8.1" y="6.500000000000001" width="2.6" height="3.6" transform="rotate(45.0 9.4 13.9)"/><rect x="8.1" y="6.500000000000001" width="2.6" height="3.6" transform="rotate(90.0 9.4 13.9)"/><rect x="8.1" y="6.500000000000001" width="2.6" height="3.6" transform="rotate(135.0 9.4 13.9)"/><rect x="8.1" y="6.500000000000001" width="2.6" height="3.6" transform="rotate(180.0 9.4 13.9)"/><rect x="8.1" y="6.500000000000001" width="2.6" height="3.6" transform="rotate(225.0 9.4 13.9)"/><rect x="8.1" y="6.500000000000001" width="2.6" height="3.6" transform="rotate(270.0 9.4 13.9)"/><rect x="8.1" y="6.500000000000001" width="2.6" height="3.6" transform="rotate(315.0 9.4 13.9)"/><circle cx="9.4" cy="13.9" r="5.6"/><rect x="18.849999999999998" y="3.6000000000000005" width="1.7" height="2.6" transform="rotate(0.0 19.7 8)"/><rect x="18.849999999999998" y="3.6000000000000005" width="1.7" height="2.6" transform="rotate(60.0 19.7 8)"/><rect x="18.849999999999998" y="3.6000000000000005" width="1.7" height="2.6" transform="rotate(120.0 19.7 8)"/><rect x="18.849999999999998" y="3.6000000000000005" width="1.7" height="2.6" transform="rotate(180.0 19.7 8)"/><rect x="18.849999999999998" y="3.6000000000000005" width="1.7" height="2.6" transform="rotate(240.0 19.7 8)"/><rect x="18.849999999999998" y="3.6000000000000005" width="1.7" height="2.6" transform="rotate(300.0 19.7 8)"/><circle cx="19.7" cy="8" r="3.1"/><rect x="18.849999999999998" y="15.2" width="1.7" height="2.6" transform="rotate(0.0 19.7 19.6)"/><rect x="18.849999999999998" y="15.2" width="1.7" height="2.6" transform="rotate(60.0 19.7 19.6)"/><rect x="18.849999999999998" y="15.2" width="1.7" height="2.6" transform="rotate(120.0 19.7 19.6)"/><rect x="18.849999999999998" y="15.2" width="1.7" height="2.6" transform="rotate(180.0 19.7 19.6)"/><rect x="18.849999999999998" y="15.2" width="1.7" height="2.6" transform="rotate(240.0 19.7 19.6)"/><rect x="18.849999999999998" y="15.2" width="1.7" height="2.6" transform="rotate(300.0 19.7 19.6)"/><circle cx="19.7" cy="19.6" r="3.1"/></g><g fill="#dadada"><circle cx="9.4" cy="13.9" r="2.6"/><circle cx="19.7" cy="8" r="1.3"/><circle cx="19.7" cy="19.6" r="1.3"/></g></svg>
<svg class="abs" style="left:24.00px;top:271.00px" width="22" height="20" viewBox="0 0 22 20"><path d="M1.2 1.3H20.8V15.6H1.2Z" fill="none" stroke="#3c3c3c" stroke-width="1.4"/><rect x="0.5" y="12" width="21" height="4" fill="#3c3c3c"/><rect x="7.8" y="15.5" width="6.4" height="3.4" fill="#3c3c3c"/></svg>
<svg class="abs" style="left:24.00px;top:336.00px" width="22" height="19" viewBox="0 0 22 19"><g fill="#3c3c3c"><rect x="1" y="15.4" width="2.6" height="2.6"/><rect x="5.1" y="13.8" width="2.8" height="4.2"/><rect x="9.4" y="11" width="2.9" height="7"/><rect x="13.8" y="6.9" width="2.9" height="11.1"/><rect x="17.9" y="0.8" width="3" height="17.2"/></g></svg>
<svg class="abs" style="left:24.00px;top:399.00px" width="22" height="22" viewBox="0 0 22 22"><g fill="#3c3c3c"><path d="M1 4.8L4.2 0.9H17.8L21 4.8Z"/><rect x="1" y="6.1" width="20" height="3.6"/><rect x="1" y="11.4" width="20" height="4.2"/><rect x="1" y="17.2" width="20" height="3.8"/></g><g fill="#dadada"><rect x="16.2" y="7.3" width="3.5" height="1.3"/><rect x="11.4" y="12.9" width="8.3" height="1.1"/><rect x="15" y="18.6" width="4.7" height="1.1"/></g></svg>
<div class="abs" style="left:0;top:121px;width:207px;height:67px;border:5px solid #ec1c24;border-left-width:4px"></div>
<div id="fly"></div>
<div class="abs" style="left:227px;top:116px;width:188px;height:31px;background:#f5f5f5"></div>
<div class="t" style="top:83.31px;font-size:17px;line-height:17px;color:#a3a3a3;font-family:'Liberation Sans',sans-serif;left:227.50px;">Компоненты</div>
<div class="t" style="top:126.00px;font-size:13px;line-height:13px;color:#4d4d4d;font-family:'Liberation Sans',sans-serif;letter-spacing:0.06px;left:232.50px;-webkit-text-stroke:0.3px #4d4d4d">Поставщики ресурсов</div>
<div class="t" style="top:161.83px;font-size:12.6px;line-height:12.6px;color:#4a4a4a;font-family:'Liberation Sans',sans-serif;left:232.50px;">Домены аутентификации</div>
<div class="t" style="top:196.83px;font-size:12.6px;line-height:12.6px;color:#4a4a4a;font-family:'Liberation Sans',sans-serif;letter-spacing:-0.12px;left:232.50px;">Параметры гостевых ОС</div>
<div class="t" style="top:231.83px;font-size:12.6px;line-height:12.6px;color:#4a4a4a;font-family:'Liberation Sans',sans-serif;left:232.50px;">Протоколы доставки</div>
<div class="t" style="top:266.83px;font-size:12.6px;line-height:12.6px;color:#4a4a4a;font-family:'Liberation Sans',sans-serif;left:232.50px;">Сети</div>
</body></html>
